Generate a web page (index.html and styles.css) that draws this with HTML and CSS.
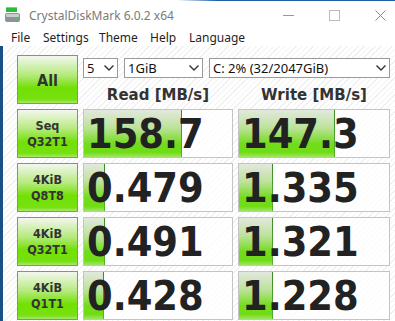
FILE: index.html
```html
<!DOCTYPE html>
<html lang="en">
<head>
    <meta charset="UTF-8">
    <meta name="viewport" content="width=device-width, initial-scale=1.0">
    <title>CrystalDiskMark 6.0.2 x64</title>
    <link rel="stylesheet" href="styles.css">
</head>
<body>

<div class="window">
    <div class="titlebar">
        <svg class="appIcon" width="16" height="16" viewBox="0 0 16 16">
            <rect x="1" y="0" width="11" height="5" fill="#2dbb3a"/>
            <rect x="1" y="0" width="11" height="1" fill="#6fe070"/>
            <rect x="0" y="6" width="15" height="9" rx="2" fill="#8d9499"/>
            <rect x="1" y="7" width="13" height="3" rx="1" fill="#c9cdd0"/>
            <rect x="11" y="11" width="2" height="2" fill="#3fd04a"/>
        </svg>
        <span class="title">CrystalDiskMark 6.0.2 x64</span>
        <div class="controls">
            <svg width="11" height="11" viewBox="0 0 11 11"><line x1="0" y1="5.5" x2="11" y2="5.5" stroke="#999" stroke-width="1"/></svg>
            <svg width="11" height="11" viewBox="0 0 11 11"><rect x="0.5" y="0.5" width="10" height="10" fill="none" stroke="#bbb" stroke-width="1"/></svg>
            <svg width="11" height="11" viewBox="0 0 11 11"><path d="M0.5 0.5 L10.5 10.5 M10.5 0.5 L0.5 10.5" stroke="#888" stroke-width="1"/></svg>
        </div>
    </div>

    <div class="menubar">
        <span class="menuFile">File</span>
        <span class="menuSettings">Settings</span>
        <span class="menuTheme">Theme</span>
        <span class="menuHelp">Help</span>
        <span>Language</span>
    </div>

    <div class="main">
        <div class="board">
            <div class="testBtn allBtn">All</div>

            <div class="topRight">
                <div class="selects">
                    <div class="selectBox selCount">5<svg class="chev" width="10" height="6" viewBox="0 0 10 6"><path d="M0.5 0.5 L5 5 L9.5 0.5" fill="none" stroke="#333" stroke-width="1.4"/></svg></div>
                    <div class="selectBox selSize">1GiB<svg class="chev" width="10" height="6" viewBox="0 0 10 6"><path d="M0.5 0.5 L5 5 L9.5 0.5" fill="none" stroke="#333" stroke-width="1.4"/></svg></div>
                    <div class="selectBox selDrive">C: 2% (32/2047GiB)<svg class="chev" width="10" height="6" viewBox="0 0 10 6"><path d="M0.5 0.5 L5 5 L9.5 0.5" fill="none" stroke="#333" stroke-width="1.4"/></svg></div>
                </div>
                <div class="heads">
                    <span>Read [MB/s]</span>
                    <span>Write [MB/s]</span>
                </div>
            </div>

            <div class="testBtn">Seq<br>Q32T1</div>
            <div class="result" style="--fill: 97px">158.7</div>
            <div class="result" style="--fill: 95px">147.3</div>

            <div class="testBtn">4KiB<br>Q8T8</div>
            <div class="result" style="--fill: 20px">0.479</div>
            <div class="result" style="--fill: 33px">1.335</div>

            <div class="testBtn">4KiB<br>Q32T1</div>
            <div class="result" style="--fill: 20px">0.491</div>
            <div class="result" style="--fill: 33px">1.321</div>

            <div class="testBtn">4KiB<br>Q1T1</div>
            <div class="result" style="--fill: 19px">0.428</div>
            <div class="result" style="--fill: 33px">1.228</div>
        </div>
    </div>
</div>

</body>
</html>
```

FILE: styles.css
```css
body {
    margin: 0;
    padding: 0;
    background: #ffffff;
    font-family: "Noto Sans", sans-serif;
    overflow: hidden;
}

.window {
    width: 395px;
    height: 321px;
    overflow: hidden;
}

.titlebar {
    height: 29px;
    display: flex;
    align-items: center;
    box-sizing: border-box;
    border-top: 1px solid;
    border-image: linear-gradient(to right, #ffffff 45%, #1a5fa8 55%) 1;
}

.appIcon {
    margin-left: 5px;
    margin-right: 8px;
}

.title {
    font-size: 12px;
    color: #7a7a7a;
}

.controls {
    margin-left: auto;
    display: flex;
    align-items: center;
    gap: 35px;
    margin-right: 9px;
}

.menubar {
    height: 17px;
    display: flex;
    align-items: center;
    padding-left: 11px;
    font-size: 12px;
    color: #1e1e1e;
}

.menuFile { width: 32px; }
.menuSettings { width: 56px; }
.menuTheme { width: 51px; }
.menuHelp { width: 39px; }

.main {
    height: 275px;
    border-left: 3px solid #1b4f86;
    background: repeating-linear-gradient(135deg, #ffffff 0 3px, #f0f0f0 3px 4px);
}

.board {
    display: grid;
    grid-template-columns: 61px 150px 152px;
    grid-template-rows: repeat(5, 49px);
    column-gap: 5px;
    row-gap: 5px;
    padding: 9px 0 0 14px;
}

.testBtn {
    box-sizing: border-box;
    border: 1px solid #8c8c8c;
    background: linear-gradient(#f3f7ef, #b6ea7e 40%, #72e005 68%, #78e010 92%, #a6e86a);
    display: flex;
    align-items: center;
    justify-content: center;
    text-align: center;
    font-family: "DejaVu Sans", sans-serif;
    font-stretch: condensed;
    font-weight: bold;
    font-size: 12.5px;
    line-height: 16px;
    color: #333333;
}

.allBtn {
    font-size: 16px;
    padding-top: 2px;
}

.topRight {
    grid-column: 2 / 4;
    display: flex;
    flex-direction: column;
}

.selects {
    display: flex;
    gap: 6px;
    margin-top: 3px;
}

.selectBox {
    box-sizing: border-box;
    height: 20px;
    border: 1px solid #9a9a9a;
    background: #ffffff;
    display: flex;
    align-items: center;
    justify-content: space-between;
    padding: 0 3px 0 3px;
    font-size: 13px;
    color: #111111;
}

.selCount { width: 35px; }
.selSize { width: 79px; }
.selDrive { width: 181px; }

.heads {
    display: grid;
    grid-template-columns: 150px 152px;
    column-gap: 5px;
    margin-top: 8px;
    line-height: 18px;
    font-family: "DejaVu Sans", sans-serif;
    font-weight: bold;
    font-size: 15px;
    color: #333333;
    text-align: center;
}

.result {
    box-sizing: border-box;
    border: 1px solid #c4c4c4;
    background:
        linear-gradient(#3d8a2a, #58b030) no-repeat var(--fill) 0 / 1px 100%,
        linear-gradient(#e2e9de, #bde29a 38%, #72dc1c 72%, #70dc14 90%, #a0e466) no-repeat 0 0 / var(--fill) 100%,
        rgba(255, 255, 255, 0.75);
    display: flex;
    align-items: center;
    padding-left: 3px;
    font-family: "DejaVu Sans", sans-serif;
    font-stretch: condensed;
    font-weight: bold;
    font-size: 41px;
    color: #222222;
}
```
